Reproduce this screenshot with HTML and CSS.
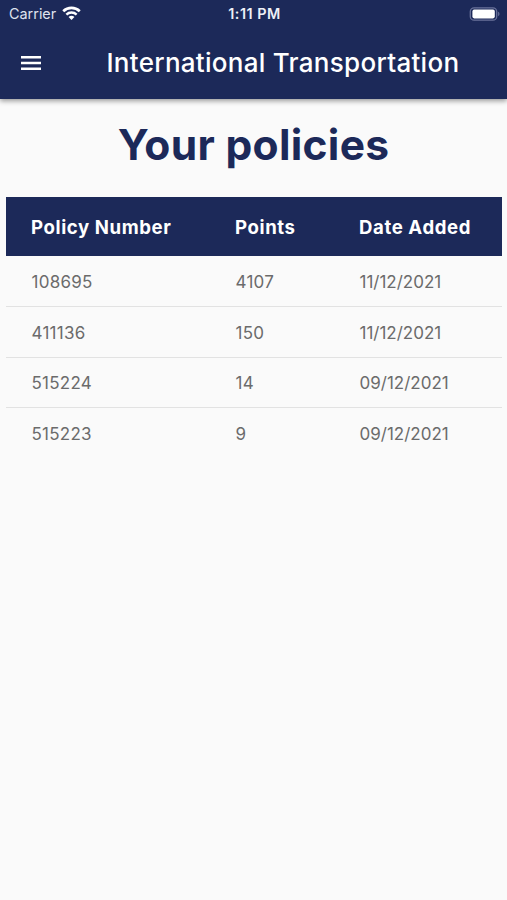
FILE: index.html
```html
<!DOCTYPE html>
<html lang="en">
<head>
    <meta charset="UTF-8">
    <meta name="viewport" content="width=device-width, initial-scale=1.0">
    <title>International Transportation</title>
    <link rel="stylesheet" href="styles.css">
</head>
<body>

<header class="app-header">
    <div class="status-bar">
        <div class="carrier">
            <span>Carrier</span>
            <svg class="wifi" width="19" height="15" viewBox="0 0 20 15">
                <path d="M1.3 5.2a12.4 12.4 0 0 1 17.4 0" fill="none" stroke="#fff" stroke-width="2.8"/>
                <path d="M4.6 8.7a7.7 7.7 0 0 1 10.8 0" fill="none" stroke="#fff" stroke-width="2.5"/>
                <path d="M10 14.4l-3.1-3.1a4.4 4.4 0 0 1 6.2 0z" fill="#fff"/>
            </svg>
        </div>
        <div class="clock">1:11 PM</div>
        <div class="battery">
            <svg width="31" height="14" viewBox="0 0 31 14">
                <rect x="1.3" y="0.8" width="26.4" height="12.4" rx="3.8" fill="none" stroke="#69729a" stroke-width="1.3"/>
                <rect x="3.4" y="2.6" width="22.4" height="8.8" rx="1.8" fill="#fff"/>
                <path d="M29.1 4.8c1.8.6 1.8 3.8 0 4.4z" fill="#69729a"/>
            </svg>
        </div>
    </div>
    <div class="toolbar">
        <button class="btn-menu" aria-label="Menu">
            <svg width="20" height="14" viewBox="0 0 20 14">
                <path d="M0 1.3h20M0 7h20M0 12.7h20" stroke="#fff" stroke-width="2.4"/>
            </svg>
        </button>
        <div class="title">International Transportation</div>
    </div>
</header>

<main>
    <h1>Your policies</h1>
    <table class="policies">
        <thead>
            <tr>
                <th class="col-number">Policy Number</th>
                <th class="col-points">Points</th>
                <th>Date Added</th>
            </tr>
        </thead>
        <tbody>
            <tr><td>108695</td><td>4107</td><td class="date">11/12/2021</td></tr>
            <tr><td>411136</td><td>150</td><td class="date">11/12/2021</td></tr>
            <tr><td>515224</td><td>14</td><td class="date">09/12/2021</td></tr>
            <tr><td>515223</td><td>9</td><td class="date">09/12/2021</td></tr>
        </tbody>
    </table>
</main>

</body>
</html>
```
FILE: styles.css
```css
:root {
    --navy: #1c2959;
    --bg: #fafafa;
    --text: #6b6b6b;
    --line: #e2e2e2;
}

* {
    box-sizing: border-box;
    margin: 0;
    padding: 0;
}

body {
    background: var(--bg);
    font-family: Inter, sans-serif;
    min-height: 100vh;
}

/* Header */
.app-header {
    height: 99px;
    background: var(--navy);
    color: #fff;
    box-shadow: 0 2px 5px rgba(0, 0, 0, 0.4);
}

.status-bar {
    display: grid;
    grid-template-columns: 1fr auto 1fr;
    align-items: center;
    height: 27px;
    padding: 0 7px 0 9px;
}

.carrier {
    display: flex;
    align-items: center;
    gap: 6px;
    color: #dfe2ee;
    font-size: 14.4px;
}

.clock {
    color: #eef0f7;
    font-size: 14.4px;
    font-weight: 600;
    letter-spacing: 0.5px;
}

.battery {
    display: flex;
    justify-content: flex-end;
}

.toolbar {
    display: flex;
    align-items: center;
    height: 71px;
    padding-left: 20.5px;
}

.btn-menu {
    display: flex;
    background: none;
    border: none;
}

.title {
    margin-left: 66px;
    font-size: 26px;
    font-weight: 500;
    letter-spacing: 0.28px;
    white-space: nowrap;
}

/* Policies */
h1 {
    padding-top: 19px;
    color: var(--navy);
    font-size: 42.5px;
    line-height: 53px;
    font-weight: 700;
    letter-spacing: 0.3px;
    text-align: center;
}

.policies {
    width: 496px;
    margin: 26px 0 0 6px;
    border-collapse: separate;
    border-spacing: 0;
    table-layout: fixed;
}

.policies th {
    height: 59px;
    padding-left: 25px;
    background: var(--navy);
    color: #fff;
    font-size: 18.6px;
    font-weight: 700;
    letter-spacing: 0.6px;
    text-align: left;
    white-space: nowrap;
}

.col-number { width: 204px; }
.col-points { width: 124px; }

.policies td {
    height: 51px;
    padding: 1px 0 0 25.5px;
    border-bottom: 1px solid var(--line);
    color: var(--text);
    font-size: 17px;
    letter-spacing: 0.25px;
}

.policies .date {
    letter-spacing: 0;
}

.policies tr:nth-last-child(-n+2) td {
    height: 50px;
}

.policies tr:last-child td {
    border-bottom: none;
}
```
